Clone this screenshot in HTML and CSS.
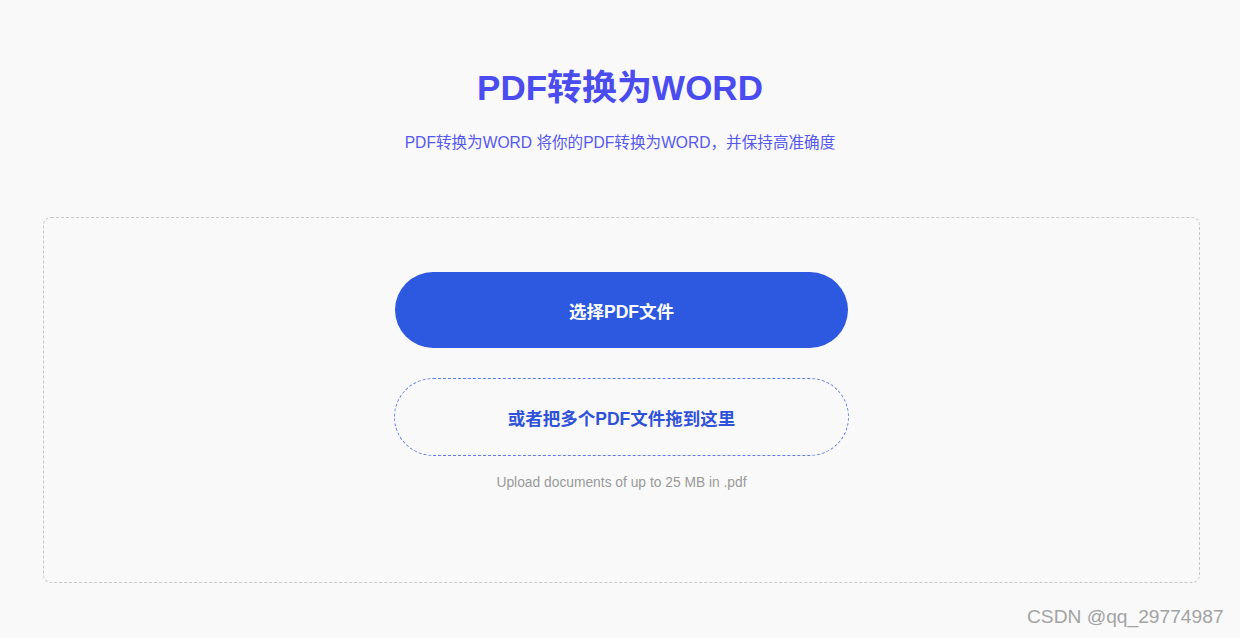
FILE: index.html
```html
<!DOCTYPE html>
<html lang="zh-CN">
<head>
<meta charset="utf-8">
<title>PDF转换为WORD</title>
<link rel="stylesheet" href="styles.css">
</head>
<body>
<main class="page">
  <header class="head">
    <h1 class="title">PDF转换为WORD</h1>
    <p class="subtitle">PDF转换为WORD 将你的PDF转换为WORD，并保持高准确度</p>
  </header>
  <section class="dropzone">
    <button class="btn btn-primary" type="button">选择PDF文件</button>
    <div class="btn btn-drop">或者把多个PDF文件拖到这里</div>
    <p class="hint">Upload documents of up to 25 MB in .pdf</p>
  </section>
</main>
<div class="watermark">CSDN @qq_29774987</div>
</body>
</html>
```
FILE: styles.css
```css
html, body {
  margin: 0;
  padding: 0;
}
body {
  background: #f9f9f9;
  font-family: "Liberation Sans", "Noto Sans CJK SC", sans-serif;
  width: 1240px;
  height: 638px;
  overflow: hidden;
  position: relative;
}
.page {
  display: flex;
  flex-direction: column;
  padding-top: 68px;
}
.head {
  display: flex;
  flex-direction: column;
  align-items: center;
}
.title {
  margin: 0;
  font-size: 35px;
  line-height: 40px;
  font-weight: 700;
  color: #4a4cf0;
}
.subtitle {
  margin: 25px 0 0;
  font-size: 15.6px;
  line-height: 20px;
  color: #5558ee;
}
.dropzone {
  margin: 64px 40px 0 43px;
  height: 366px;
  box-sizing: border-box;
  border: 1px dashed #c8c8c8;
  border-radius: 8px;
  display: flex;
  flex-direction: column;
  align-items: center;
  padding-top: 54px;
}
.btn {
  display: flex;
  align-items: center;
  justify-content: center;
  box-sizing: border-box;
  border-radius: 40px;
  font-family: "Liberation Sans", "Noto Sans CJK SC", sans-serif;
  font-size: 17.5px;
  font-weight: 700;
}
.btn-primary {
  width: 453px;
  height: 76px;
  border: none;
  background: #2d59e0;
  color: #ffffff;
  padding: 0;
}
.btn-drop {
  margin-top: 30px;
  width: 455px;
  height: 78px;
  border: 1px dashed #5a7ee8;
  color: #2f52d8;
  background: transparent;
}
.hint {
  margin: 17px 0 0;
  font-size: 13.8px;
  line-height: 20px;
  color: #999999;
}
.watermark {
  position: absolute;
  left: 1027px;
  top: 605px;
  font-size: 19.2px;
  line-height: 24px;
  color: #a3a3a3;
  white-space: nowrap;
}
```
